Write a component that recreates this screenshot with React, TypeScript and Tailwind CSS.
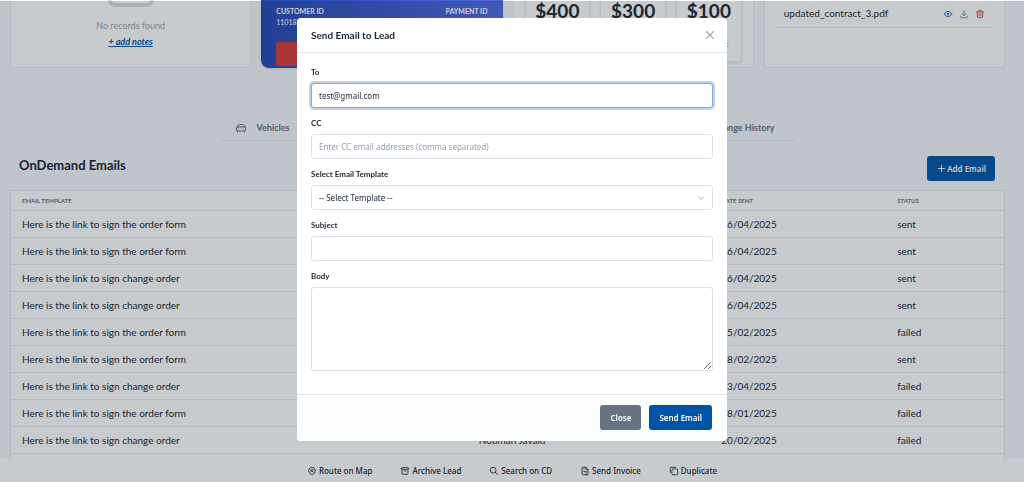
import type { ReactNode } from "react";
import { LuCarFront } from "react-icons/lu";
import {
  TbArchive,
  TbChevronDown,
  TbCopy,
  TbDownload,
  TbEye,
  TbFileInvoice,
  TbMapPin,
  TbPlus,
  TbSearch,
  TbTrash,
  TbX,
} from "react-icons/tb";

interface EmailRow {
  template: string;
  sentBy: string;
  date: string;
  status: "sent" | "failed";
}

const ORDER_FORM = "Here is the link to sign the order form";
const CHANGE_ORDER = "Here is the link to sign change order";
const AGENT = "Nouman Javaid";

const EMAILS: EmailRow[] = [
  { template: ORDER_FORM, sentBy: AGENT, date: "16/04/2025", status: "sent" },
  { template: ORDER_FORM, sentBy: AGENT, date: "16/04/2025", status: "sent" },
  { template: CHANGE_ORDER, sentBy: AGENT, date: "16/04/2025", status: "sent" },
  { template: CHANGE_ORDER, sentBy: AGENT, date: "16/04/2025", status: "sent" },
  { template: ORDER_FORM, sentBy: AGENT, date: "25/02/2025", status: "failed" },
  { template: ORDER_FORM, sentBy: AGENT, date: "28/02/2025", status: "sent" },
  { template: CHANGE_ORDER, sentBy: AGENT, date: "03/04/2025", status: "failed" },
  { template: ORDER_FORM, sentBy: AGENT, date: "28/01/2025", status: "failed" },
  { template: CHANGE_ORDER, sentBy: AGENT, date: "20/02/2025", status: "failed" },
];

const ACTIONS = [
  { label: "Route on Map", Icon: TbMapPin },
  { label: "Archive Lead", Icon: TbArchive },
  { label: "Search on CD", Icon: TbSearch },
  { label: "Send Invoice", Icon: TbFileInvoice },
  { label: "Duplicate", Icon: TbCopy },
];

const FIELD =
  "block w-full rounded-[3px] border border-[#dce1e7] bg-white px-[7px] font-['Noto_Sans',sans-serif] text-[8px] text-[#182433] outline-none placeholder:text-[#929dab]";

export default function App() {
  return (
    <div className="h-screen overflow-hidden bg-[#f5f8fb] font-[Lato,sans-serif] text-[#182433]">
      <main className="pr-[19px] pl-[10px]">
        <SummaryCards />
        <LeadTabs />
        <EmailsSection />
      </main>
      <ActionBar />
      <SendEmailModal />
    </div>
  );
}

function Card({ children, className = "" }: { children: ReactNode; className?: string }) {
  return (
    <section className={`h-[68px] rounded-b-[2px] border border-t-0 border-[#e6eaee] bg-white ${className}`}>
      {children}
    </section>
  );
}

function SummaryCards() {
  return (
    <div className="grid grid-cols-4 gap-[10px]">
      <Card className="flex flex-col items-center">
        <div className="h-[7px] w-[46px] rounded-b-[7px] border-x-4 border-b-4 border-[#dadcde]" />
        <p className="mt-3 text-[9px] leading-[14px] text-[#9b9fa5]">No records found</p>
        <a href="#notes" className="mt-[2px] text-[9px] leading-[14px] font-bold text-[#0054a6] italic underline">
          + add notes
        </a>
      </Card>

      <section className="flex h-[68px] flex-col rounded-b-lg bg-linear-to-r from-[#2548b5] to-[#4f6ae0] px-[15px] text-white shadow">
        <div className="flex justify-between pt-[6px] text-[7px] leading-[11px] font-bold">
          <span>CUSTOMER ID</span>
          <span>PAYMENT ID</span>
        </div>
        <p className="text-[7px] leading-[11px]">11018274</p>
        <div className="mt-[14px] h-6 rounded-[2px] bg-[#d83939]" />
      </section>

      <Card className="grid grid-cols-3 gap-[10px] px-[11px]">
        <Amount value="$400" />
        <Amount value="$300" />
        <Amount value="$100" note="DUE OF" />
      </Card>

      <Card className="px-3">
        <div className="flex h-[28px] items-center justify-between border-b border-[#e6eaee] pr-[7px] pl-[7px]">
          <span className="text-[10px]">updated_contract_3.pdf</span>
          <span className="flex gap-[6px]">
            <button type="button" aria-label="View" className="text-[#0054a6]">
              <TbEye size={10} />
            </button>
            <button type="button" aria-label="Download" className="text-[#2fa34f]">
              <TbDownload size={10} />
            </button>
            <button type="button" aria-label="Delete" className="text-[#d63939]">
              <TbTrash size={10} />
            </button>
          </span>
        </div>
      </Card>
    </div>
  );
}

function Amount({ value, note }: { value: string; note?: string }) {
  return (
    <div className="flex h-[62px] flex-col items-center rounded-b-[3px] border border-t-0 border-[#e6eaee] shadow-sm">
      <span className="text-[19px] leading-[22px] font-bold">{value}</span>
      {note && <span className="mt-[18px] self-end pr-3 text-[8px] leading-[12px] text-[#667382]">{note}</span>}
    </div>
  );
}

function LeadTabs() {
  return (
    <nav className="mx-auto mt-[48px] flex h-[25px] max-w-[574px] items-center justify-between border-b border-[#e0e4e9] pr-5 pl-[14px] text-[9px] font-bold text-[#667382]">
      <a href="#vehicles" className="flex items-center gap-[10px]">
        <LuCarFront size={12} />
        Vehicles
      </a>
      <a href="#history">Change History</a>
    </nav>
  );
}

function EmailsSection() {
  return (
    <section>
      <div className="flex items-center justify-between pt-[15px] pr-[10px] pb-[9px] pl-[9px]">
        <h2 className="pb-2 text-[13px] leading-4 font-bold">OnDemand Emails</h2>
        <button
          type="button"
          className="flex h-[25px] items-center rounded-[3px] bg-[#0054a6] px-[9px] font-['Noto_Sans',sans-serif] text-[8px] font-semibold text-white"
        >
          <TbPlus size={11} />
          Add Email
        </button>
      </div>
      <table className="w-full table-fixed border border-[#e2e6ea] bg-white text-left">
        <thead>
          <tr className="h-[20px] text-[6px] text-[#667382]">
            <th className="w-[46%] pl-[11px] font-bold">EMAIL TEMPLATE</th>
            <th className="w-[24%] pl-[11px] font-bold">SENT BY</th>
            <th className="w-[18%] pl-[15px] font-bold">DATE SENT</th>
            <th className="pl-3 font-bold">STATUS</th>
          </tr>
        </thead>
        <tbody>
          {EMAILS.map((r, i) => (
            <tr key={i} className="h-[27px] border-y border-[#e2e6ea] text-[10px]">
              <td className="pl-[11px]">{r.template}</td>
              <td className="pl-[11px]">{r.sentBy}</td>
              <td className="pl-[15px]">{r.date}</td>
              <td className="pl-3">{r.status}</td>
            </tr>
          ))}
          <tr className="h-[27px]">
            <td colSpan={4} />
          </tr>
        </tbody>
      </table>
    </section>
  );
}

function ActionBar() {
  return (
    <footer className="fixed inset-x-0 bottom-0 flex h-[23px] items-center justify-center gap-7 bg-white font-['Noto_Sans',sans-serif] text-[8px] font-medium">
      {ACTIONS.map(({ label, Icon }) => (
        <button key={label} type="button" className="flex items-center gap-[2px]">
          <Icon size={10} />
          {label}
        </button>
      ))}
    </footer>
  );
}

function Field({ id, label, children }: { id: string; label: string; children: ReactNode }) {
  return (
    <div>
      <label htmlFor={id} className="mb-1 block text-[8px] leading-[14px] font-bold">
        {label}
      </label>
      {children}
    </div>
  );
}

function SendEmailModal() {
  return (
    <div className="fixed inset-x-0 top-px bottom-0 flex items-start justify-center bg-[#182433]/24 pt-[17px]">
      <form
        role="dialog"
        aria-labelledby="send-email-title"
        onSubmit={(e) => e.preventDefault()}
        className="w-full max-w-[430px] overflow-hidden rounded-[4px] bg-white"
      >
        <header className="flex h-[35px] items-center justify-between border-b border-[#e3e6ea] pr-[10px] pl-[14px]">
          <h1 id="send-email-title" className="text-[10px] font-bold">
            Send Email to Lead
          </h1>
          <button type="button" aria-label="Close dialog" className="text-[#a3a7ad]">
            <TbX size={14} />
          </button>
        </header>

        <div className="flex flex-col gap-2 px-[14px] pt-3 pb-[23px]">
          <Field id="to" label="To">
            <input
              id="to"
              type="text"
              autoFocus
              defaultValue="test@gmail.com"
              onFocus={(e) => e.target.setSelectionRange(99, 99)}
              className={`${FIELD} h-[25px] focus:border-[#80aad3] focus:ring-2 focus:ring-[#bfd4e9]`}
            />
          </Field>
          <Field id="cc" label="CC">
            <input
              id="cc"
              type="text"
              placeholder="Enter CC email addresses (comma separated)"
              className={`${FIELD} h-[25px]`}
            />
          </Field>
          <Field id="template" label="Select Email Template">
            <div className="grid items-center">
              <select id="template" className={`${FIELD} col-start-1 row-start-1 h-[25px] appearance-none`}>
                <option>-- Select Template --</option>
              </select>
              <TbChevronDown
                size={10}
                className="pointer-events-none col-start-1 row-start-1 mr-[7px] justify-self-end text-[#929dab]"
              />
            </div>
          </Field>
          <Field id="subject" label="Subject">
            <input id="subject" type="text" className={`${FIELD} h-[25px]`} />
          </Field>
          <Field id="body" label="Body">
            <textarea id="body" className={`${FIELD} h-[84px] resize-y`} />
          </Field>
        </div>

        <footer className="flex justify-end gap-2 border-t border-[#e3e6ea] bg-[#fcfdfd] px-[15px] pt-[10px] pb-[11px] font-['Noto_Sans',sans-serif] text-[8px] font-semibold text-white">
          <button type="button" className="h-[25px] rounded-[3px] bg-[#667382] px-[10px]">
            Close
          </button>
          <button type="submit" className="h-[25px] rounded-[3px] bg-[#0054a6] px-[10px]">
            Send Email
          </button>
        </footer>
      </form>
    </div>
  );
}
